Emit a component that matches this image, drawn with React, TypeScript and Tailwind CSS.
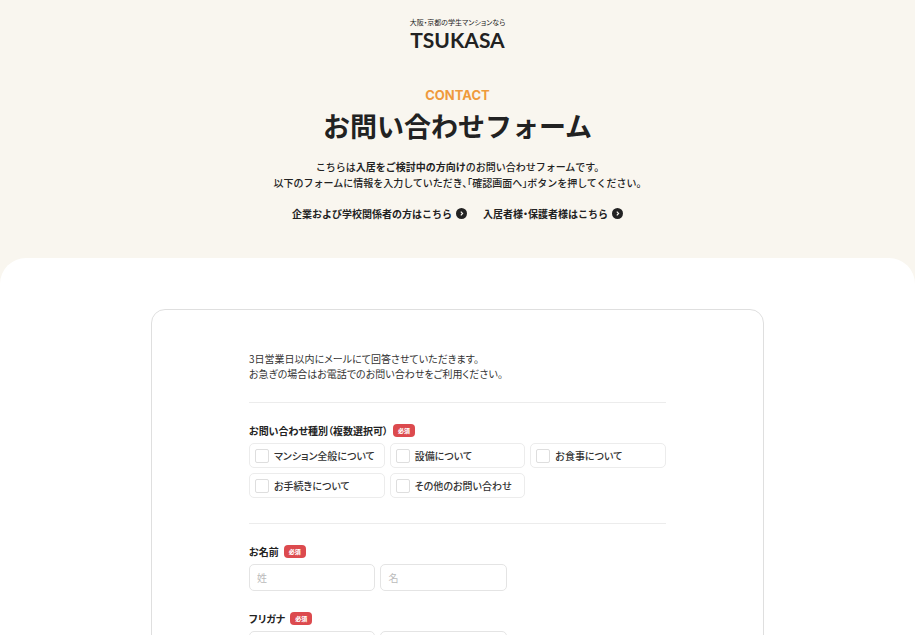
import { useState } from 'react';

const topics = [
  'マンション全般について',
  '設備について',
  'お食事について',
  'お手続きについて',
  'その他のお問い合わせ',
];

function RequiredBadge() {
  return (
    <span className="inline-flex h-[13px] items-center rounded-[4px] bg-[#dc4a4e] px-[5px] text-[6px] leading-none font-black text-white [font-feature-settings:normal]">
      必須
    </span>
  );
}

function ArrowLink({ href, children }: { href: string; children: string }) {
  return (
    <a href={href} className="flex items-center gap-1 font-bold">
      {children}
      <svg viewBox="0 0 11 11" className="size-[11px]" aria-hidden="true">
        <circle cx="5.5" cy="5.5" r="5.5" fill="#222" />
        <path d="M4.8 3.7 6.6 5.5 4.8 7.3" fill="none" stroke="#f9f6ef" strokeWidth="1.2" />
      </svg>
    </a>
  );
}

function TopicCheckbox({ label }: { label: string }) {
  const [checked, setChecked] = useState(false);

  return (
    <label className="flex h-[25px] cursor-pointer items-center gap-[5px] rounded-[5px] border border-[#ececec] px-[5px] font-medium">
      <input
        type="checkbox"
        checked={checked}
        onChange={(e) => setChecked(e.target.checked)}
        className="size-[14px] shrink-0 appearance-none rounded-[2px] border border-[#dedede] bg-white checked:bg-[#222]"
      />
      {label}
    </label>
  );
}

function NameFields({ title, fields }: { title: string; fields: { name: string; placeholder: string }[] }) {
  return (
    <fieldset>
      <legend className="flex h-[15px] items-center gap-[5px] font-bold text-[#222]">
        {title}
        <RequiredBadge />
      </legend>
      <div className="mt-[5px] grid max-w-[258px] grid-cols-2 gap-[5px]">
        {fields.map((f) => (
          <input
            key={f.name}
            type="text"
            name={f.name}
            aria-label={`${title} ${f.placeholder}`}
            placeholder={f.placeholder}
            className="h-[27px] w-full rounded-[5px] border border-[#e4e4e4] px-[7px] placeholder:text-[#bbb]"
          />
        ))}
      </div>
    </fieldset>
  );
}

export default function App() {
  return (
    <div className="h-screen overflow-x-hidden overflow-y-hidden bg-[#f9f6ef] font-['Noto_Sans_CJK_JP',sans-serif] text-[10px] leading-[15px] text-[#333]">
      <header className="flex flex-col items-center pt-[17px] text-[#222]">
        <a href="#top" className="flex flex-col items-center">
          <span className="text-[7px] leading-[10px] [font-feature-settings:'palt']">
            大阪・京都の学生マンションなら
          </span>
          <span className="font-[Lato] text-[21px] leading-[25px] font-bold">TSUKASA</span>
        </a>
      </header>

      <main>
        <div className="flex flex-col items-center pt-[35px] pb-[37px] text-center text-[#222] [font-feature-settings:'halt']">
          <p className="font-[Inter] text-[13px] leading-[16px] font-bold text-[#ef9a3c]">CONTACT</p>
          <h1 className="mt-[5px] text-[27px] leading-[36px] font-bold">お問い合わせフォーム</h1>
          <p className="mt-[15px] leading-[16px] font-medium">
            こちらは<strong className="font-bold">入居をご検討中の方向け</strong>のお問い合わせフォームです。
            <br />
            以下のフォームに情報を入力していただき、「確認画面へ」ボタンを押してください。
          </p>
          <div className="mt-[15px] flex gap-4">
            <ArrowLink href="#company">企業および学校関係者の方はこちら</ArrowLink>
            <ArrowLink href="#resident">入居者様・保護者様はこちら</ArrowLink>
          </div>
        </div>

        <section className="rounded-t-[26px] bg-white pt-[51px] pb-12">
          <form className="mx-auto w-[67%] rounded-[14px] border border-[#dfdfdf] px-5 pt-[41px] pb-12">
            <div className="mx-auto max-w-[417px] [font-feature-settings:'palt']">
              <p>
                3日営業日以内にメールにて回答させていただきます。
                <br />
                お急ぎの場合はお電話でのお問い合わせをご利用ください。
              </p>

              <fieldset className="mt-[21px] border-t border-[#ececec] pt-5">
                <legend className="float-left flex h-[15px] w-full items-center gap-[5px] font-bold text-[#222]">
                  お問い合わせ種別（複数選択可）
                  <RequiredBadge />
                </legend>
                <div className="clear-both grid grid-cols-3 gap-[5px] pt-[5px]">
                  {topics.map((t) => (
                    <TopicCheckbox key={t} label={t} />
                  ))}
                </div>
              </fieldset>

              <div className="mt-[25px] space-y-5 border-t border-[#ececec] pt-5">
                <NameFields
                  title="お名前"
                  fields={[
                    { name: 'lastName', placeholder: '姓' },
                    { name: 'firstName', placeholder: '名' },
                  ]}
                />
                <NameFields
                  title="フリガナ"
                  fields={[
                    { name: 'lastKana', placeholder: 'セイ' },
                    { name: 'firstKana', placeholder: 'メイ' },
                  ]}
                />
              </div>
            </div>
          </form>
        </section>
      </main>
    </div>
  );
}
